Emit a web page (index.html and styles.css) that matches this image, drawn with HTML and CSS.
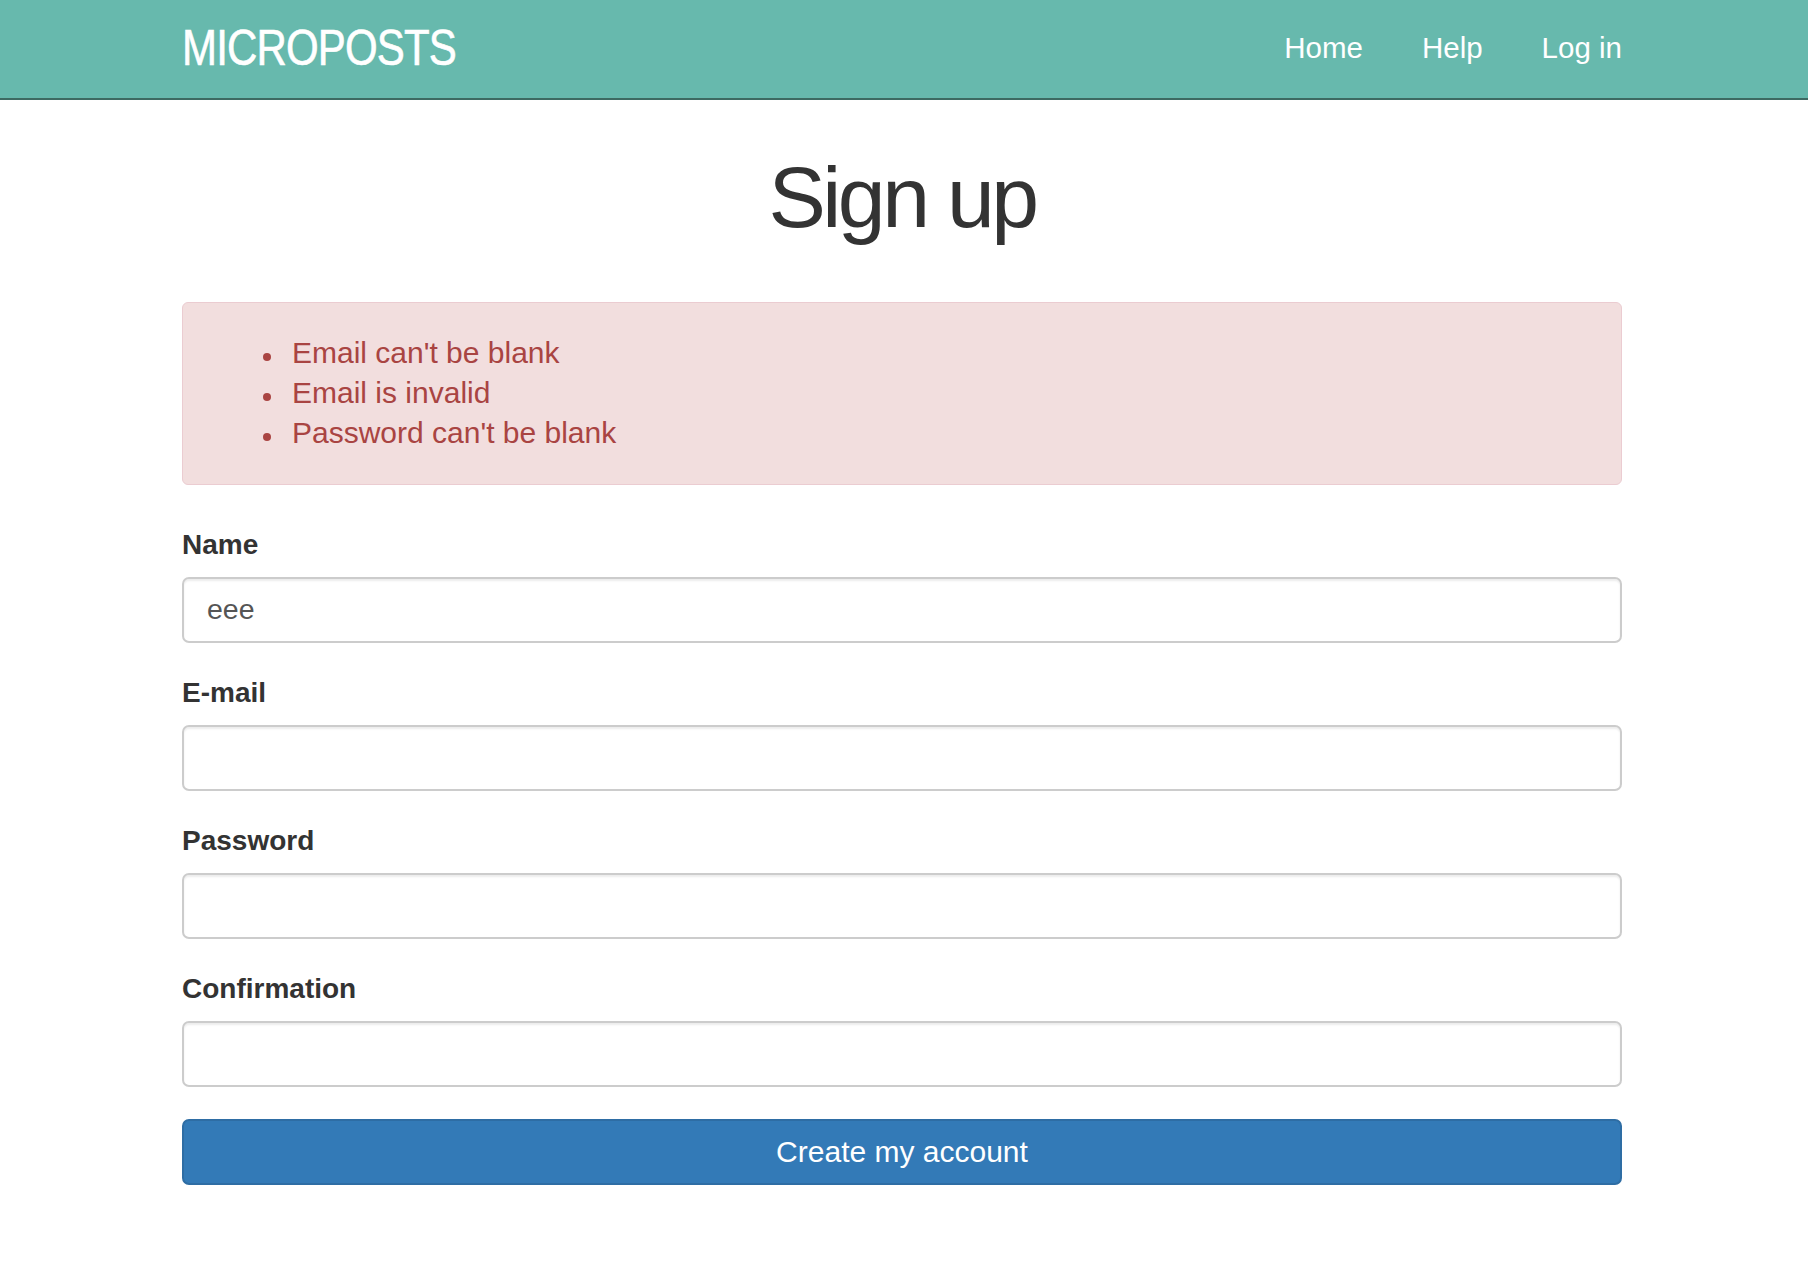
FILE: index.html
```html
<!DOCTYPE html>
<html lang="en">
<head>
<meta charset="utf-8">
<title>Sign up | Microposts</title>
<link rel="stylesheet" href="styles.css">
</head>
<body>
<header class="navbar">
  <div class="container nav-inner">
    <a class="logo" href="#">MICROPOSTS</a>
    <nav class="nav-links">
      <a href="#">Home</a>
      <a href="#">Help</a>
      <a href="#">Log in</a>
    </nav>
  </div>
</header>
<main class="container">
  <h1 class="title">Sign up</h1>
  <div class="alert">
    <ul class="errors">
      <li>Email can't be blank</li>
      <li>Email is invalid</li>
      <li>Password can't be blank</li>
    </ul>
  </div>
  <form class="form">
    <div class="group">
      <label class="label" for="name">Name</label>
      <input class="field" id="name" type="text" value="eee">
    </div>
    <div class="group">
      <label class="label" for="email">E-mail</label>
      <input class="field" id="email" type="email">
    </div>
    <div class="group">
      <label class="label" for="password">Password</label>
      <input class="field" id="password" type="password">
    </div>
    <div class="group">
      <label class="label" for="confirmation">Confirmation</label>
      <input class="field" id="confirmation" type="password">
    </div>
    <button class="submit" type="button">Create my account</button>
  </form>
</main>
</body>
</html>
```
FILE: styles.css
```css
* { box-sizing: border-box; }

body {
  margin: 0;
  font-family: "Liberation Sans", Arial, sans-serif;
  color: #333;
  background: #fff;
}

.container {
  box-sizing: content-box;
  width: 1440px;
  padding-right: 4px;
  margin: 0 auto;
}

.navbar {
  background: #67b9ad;
  border-bottom: 2px solid #3d6a62;
  height: 100px;
}

.nav-inner {
  display: flex;
  justify-content: space-between;
  align-items: flex-start;
  height: 98px;
}

.logo {
  display: inline-block;
  color: #fff;
  text-decoration: none;
  font-size: 50px;
  line-height: 96px;
  letter-spacing: -1px;
  transform: scaleX(0.84);
  transform-origin: left center;
  -webkit-text-stroke: 0.6px #fff;
}

.nav-links {
  display: flex;
  gap: 59px;
}

.nav-links a {
  color: #fff;
  text-decoration: none;
  font-size: 29.5px;
  line-height: 95px;
}

.title {
  margin: 50px 0 57px;
  text-align: center;
  font-size: 86px;
  line-height: 95px;
  font-weight: normal;
  letter-spacing: -3.5px;
  color: #333;
}

.alert {
  background: #f2dede;
  border: 1px solid #ebccd1;
  border-radius: 6px;
  color: #a94442;
  padding: 30px 30px 31px;
  margin-bottom: 40px;
}

.errors {
  margin: 0;
  padding-left: 50px;
  list-style: none;
  font-size: 30px;
  line-height: 40px;
}

.errors li {
  display: flex;
  align-items: flex-start;
  gap: 21px;
}

.errors li::before {
  content: "";
  flex: none;
  width: 8px;
  height: 8px;
  margin-top: 20px;
  border-radius: 50%;
  background: #a94442;
}

.form {
  display: flex;
  flex-direction: column;
}

.group {
  display: flex;
  flex-direction: column;
  margin-bottom: 30.5px;
}

.label {
  font-size: 28px;
  font-weight: bold;
  line-height: 40px;
  margin-bottom: 11.5px;
  color: #333;
}

.field {
  height: 66px;
  width: 100%;
  border: 2px solid #cccccc;
  border-radius: 7px;
  box-shadow: inset 0 2px 2px rgba(0, 0, 0, 0.075);
  padding: 0 23px;
  font-family: "Liberation Sans", Arial, sans-serif;
  font-size: 28.5px;
  color: #555;
  background: #fff;
}

.submit {
  margin-top: 2px;
  height: 66px;
  width: 100%;
  background: #337ab7;
  border: 2px solid #2e6da4;
  border-radius: 7px;
  color: #fff;
  font-family: "Liberation Sans", Arial, sans-serif;
  font-size: 30px;
}
```
